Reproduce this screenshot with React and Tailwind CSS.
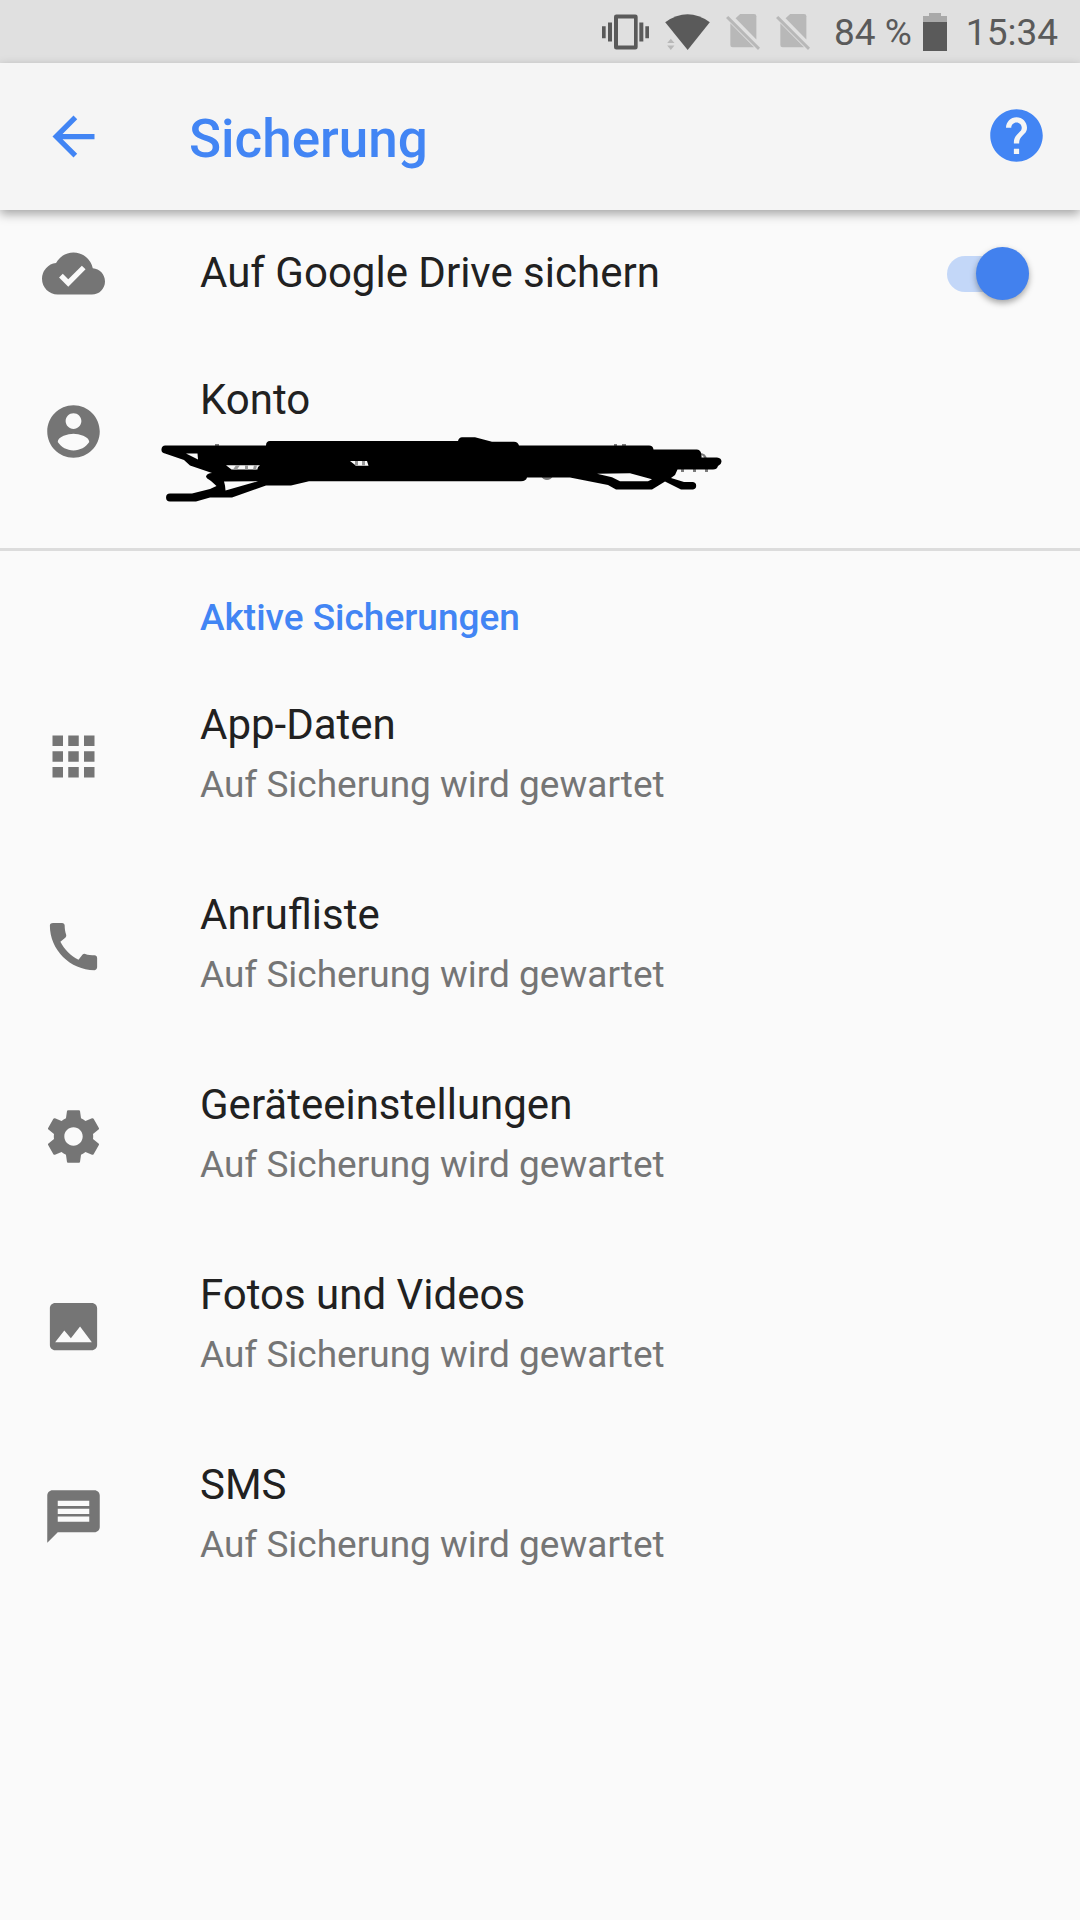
import React, { useState } from 'react'
import { MdApps, MdArrowBack, MdCall, MdCloudDone, MdHelp, MdImage, MdMessage } from 'react-icons/md'

const AccountIcon = ({ size }) => (
  <svg width={size} height={size} viewBox="0 0 24 24" fill="currentColor" aria-hidden="true">
    <path d="M12 2C6.48 2 2 6.48 2 12s4.48 10 10 10 10-4.48 10-10S17.52 2 12 2zm0 3c1.66 0 3 1.34 3 3s-1.34 3-3 3-3-1.34-3-3 1.34-3 3-3zm0 14.2c-2.5 0-4.71-1.28-6-3.22.03-1.99 4-3.08 6-3.08 1.99 0 5.97 1.09 6 3.08-1.29 1.94-3.5 3.22-6 3.22z" />
  </svg>
)

const GearIcon = ({ size }) => (
  <svg width={size} height={size} viewBox="0 0 24 24" fill="currentColor" aria-hidden="true">
    <path d="M19.43 12.98c.04-.32.07-.64.07-.98s-.03-.66-.07-.98l2.11-1.65c.19-.15.24-.42.12-.64l-2-3.46c-.12-.22-.39-.3-.61-.22l-2.49 1c-.52-.4-1.08-.73-1.69-.98l-.38-2.65C14.46 2.18 14.25 2 14 2h-4c-.25 0-.46.18-.49.42l-.38 2.65c-.61.25-1.17.59-1.69.98l-2.49-1c-.23-.09-.49 0-.61.22l-2 3.46c-.13.22-.07.49.12.64l2.11 1.65c-.04.32-.07.65-.07.98s.03.66.07.98l-2.11 1.65c-.19.15-.24.42-.12.64l2 3.46c.12.22.39.3.61.22l2.49-1c.52.4 1.08.73 1.69.98l.38 2.65c.03.24.24.42.49.42h4c.25 0 .46-.18.49-.42l.38-2.65c.61-.25 1.17-.59 1.69-.98l2.49 1c.23.09.49 0 .61-.22l2-3.46c.12-.22.07-.49-.12-.64l-2.11-1.65zM12 15.5c-1.93 0-3.5-1.57-3.5-3.5s1.57-3.5 3.5-3.5 3.5 1.57 3.5 3.5-1.57 3.5-3.5 3.5z" />
  </svg>
)

const VibrateIcon = () => (
  <svg className="h-9 w-[47px]" viewBox="36 41 141 107" fill="currentColor" aria-hidden="true">
    <path fillRule="evenodd" d="M79 42h57a7 7 0 0 1 7 7v91a7 7 0 0 1-7 7H79a7 7 0 0 1-7-7V49a7 7 0 0 1 7-7zm5 12v81h48V54z" />
    <path d="M36 77h11v36H36zM54 66h12v57H54zM148 66h12v57h-12zM166 77h11v36h-11z" />
  </svg>
)

const WifiIcon = () => (
  <svg className="h-9 w-[45px]" viewBox="222 41 135 109" fill="currentColor" aria-hidden="true">
    <path d="M222 66Q290 18 357 66L290 150Z" />
    <path className="text-[#b8b8b8]" d="M228 129l11-13 11 13zM228 136h22l-11 14z" />
  </svg>
)

const NoSimIcon = () => (
  <svg className="h-9 w-[34px] text-[#b8b8b8]" viewBox="408 44 103 109" fill="currentColor" aria-hidden="true">
    <path d="M437 57l14-13h42q7 0 7 7v70z" />
    <path d="M421 72l72 73h-65q-7 0-7-7z" />
    <path d="M415 50l96 96-6 7-97-97z" />
  </svg>
)

const BatteryIcon = () => (
  <svg className="h-[38px] w-6" viewBox="309 36 72 114" fill="currentColor" aria-hidden="true">
    <path className="text-[#a9a9a9]" d="M309 45h18v-9h36v9h18v18h-72z" />
    <path d="M309 63h72v87h-72z" />
  </svg>
)

// Marker strokes that cover the account name
const Scribble = () => (
  <svg
    className="absolute top-0 -left-10 h-[70px] w-[565px]"
    viewBox="160 438 565 70"
    overflow="visible"
    aria-hidden="true"
  >
    <g fill="#7c7c7c">
      <path d="M215 444h4v3h-4zM541 476h12q-2 4-6 4t-6-4zM614 444h3v2h-3zM622 444h4v2h-4zM681 469h3v3h-3zM693 469h3v3h-3zM705 469h3v3h-3z" />
      <path d="M700 453q6 0 7 6h-3q0-4-4-4z" />
    </g>
    <path
      d="M166 445.5H266Q266 441 270 441H458Q459 437.3 462 437.3H475L492 441.7H514Q518 441.7 519 445.5H649Q653 445.5 653.5 449.5H697Q702 450 701.5 457.5H717Q721.5 458 721.5 461.7Q721.5 464 718 466Q717 469.5 713 469.5H677.5L675 475L671 478L684 482H693A3.8 3.8 0 0 1 693 489.5H681L665 481.5L652 489.5H616L608 485L570 477.5H527Q526 481.3 521 481.3H309L291 485.5H266L232 497.5H210L196 501.5H170A3.9 3.9 0 0 1 170 493.6H192L210 489L216.5 486L211 481Q206 478 206 476.5Q207 473 212 473L190 465.5L184 460L165 453.5A4 4 0 0 1 166 445.5Z"
      fill="#000"
    />
    <g fill="#fafafa">
      <path d="M186 453.5h11.5l.5 6zM226 465.3h34q-3 2-2.5 4.2H231.5zM350 461h17l1.5 4.7H356zM224 481.5l1 4 .5 5L258 481.3zM597 473.8l33-.5 22 6-4 2H620l-8-4z" />
    </g>
    <g fill="#9a9a9a">
      <path d="M236 465.3h4l-3 4.2h-4zM245 465.3h3v4.2h-3zM254 465.3h3l-1 4.2h-3zM355 461h3v4.5h-3zM362 461h3v4.5h-3z" />
    </g>
  </svg>
)

const BACKUPS = [
  { title: 'App-Daten', icon: MdApps },
  { title: 'Anrufliste', icon: MdCall },
  { title: 'Geräteeinstellungen', icon: GearIcon },
  { title: 'Fotos und Videos', icon: MdImage },
  { title: 'SMS', icon: MdMessage },
]

const Row = ({ icon: Icon, title, children }) => (
  <button type="button" className="flex w-full items-start gap-[95px] px-[42px] pt-[42px] pb-[41px] text-left">
    <span className="mt-[25px] shrink-0 text-[#757575]">
      <Icon size={63} />
    </span>
    <span className="flex flex-1 flex-col gap-[13px]">
      <span className="text-[42px] leading-[50px]">{title}</span>
      <span className="relative min-h-11 text-[37px] leading-[44px] text-[#757575]">{children}</span>
    </span>
  </button>
)

const App = () => {
  const [enabled, setEnabled] = useState(true)

  return (
    <div className="min-h-screen bg-[#fafafa] font-[Roboto,sans-serif] text-[#212121]">
      {/* Status bar */}
      <div className="flex h-[63px] items-center justify-end bg-[#e0e0e0] pr-[22px] text-[37px] leading-[44px] text-[#5a5a5a]">
        <div className="flex items-center gap-4">
          <VibrateIcon />
          <WifiIcon />
          <NoSimIcon />
          <NoSimIcon />
        </div>
        <span className="ml-6 pt-[3px]">84 %</span>
        <span className="ml-[11px]">
          <BatteryIcon />
        </span>
        <span className="ml-[19px] pt-[3px]">15:34</span>
      </div>

      {/* App bar */}
      <header className="relative flex h-[147px] items-center bg-[#f5f5f5] pr-8 pl-[42px] text-[#4285f4] shadow-[0_4px_10px_rgba(0,0,0,0.35)]">
        <button type="button" aria-label="Zurück">
          <MdArrowBack size={63} />
        </button>
        <h1 className="ml-[84px] flex-1 pt-1 text-[53px] leading-[60px] font-medium">Sicherung</h1>
        <button type="button" aria-label="Hilfe" className="pb-0.5">
          <MdHelp size={63} />
        </button>
      </header>

      <main>
        <section className="border-b-3 border-[#dcdcdc] pb-[25px]">
          <div className="flex items-center gap-[95px] pt-8 pr-[51px] pb-7 pl-[42px]">
            <MdCloudDone size={63} className="shrink-0 text-[#757575]" />
            <label htmlFor="drive-backup" className="flex-1 pb-0.5 text-[42px] leading-[50px]">
              Auf Google Drive sichern
            </label>
            <input
              id="drive-backup"
              type="checkbox"
              role="switch"
              checked={enabled}
              onChange={(e) => setEnabled(e.target.checked)}
              className="relative h-9 w-[82px] appearance-none rounded-full bg-[#bdbdbd] before:absolute before:-top-[9px] before:left-0 before:size-[53px] before:rounded-full before:bg-white before:shadow-[0_3px_6px_rgba(0,0,0,0.35)] checked:bg-[#c3d7f8] checked:before:right-0 checked:before:left-auto checked:before:bg-[#4281ee]"
            />
          </div>
          <Row icon={AccountIcon} title="Konto">
            <Scribble />
          </Row>
        </section>

        <section>
          <h2 className="pt-[45px] pr-[42px] pb-[18px] pl-[200px] text-[37px] leading-[44px] font-medium text-[#4285f4]">
            Aktive Sicherungen
          </h2>
          <ul>
            {BACKUPS.map((item) => (
              <li key={item.title}>
                <Row icon={item.icon} title={item.title}>
                  Auf Sicherung wird gewartet
                </Row>
              </li>
            ))}
          </ul>
        </section>
      </main>
    </div>
  )
}

export default App
